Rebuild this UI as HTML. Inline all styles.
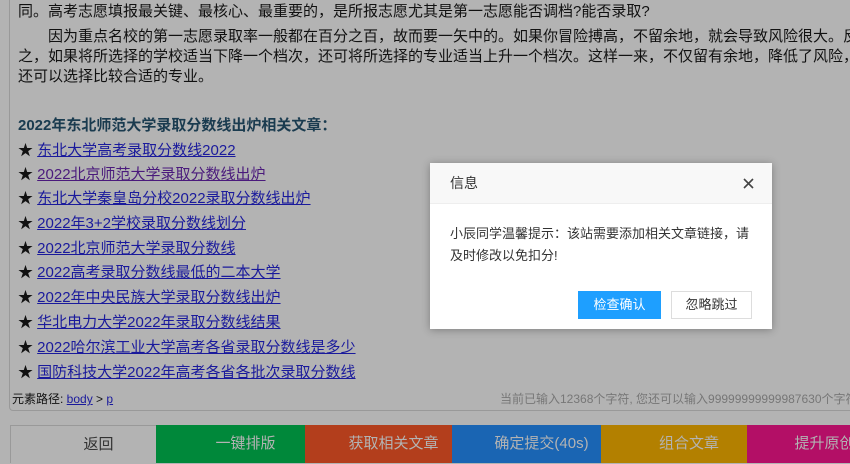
<!DOCTYPE html>
<html><head><meta charset="utf-8"><style>
body{margin:0;width:850px;height:463px;overflow:hidden;background:#b3b3b3;font-family:"Liberation Sans","Noto Sans CJK SC",sans-serif;position:relative}
.ed{position:absolute;left:9px;top:-2px;width:850px;height:412px;border-left:1px solid #999;border-bottom:1px solid #999;border-radius:0 0 0 4px}
.t{position:absolute;left:18px;font-size:15px;color:#111;white-space:nowrap;line-height:20px}
a{color:#1a1a9c;text-decoration:underline}
.h{font-weight:bold;color:#1a3b4f}
.st{position:absolute;top:390px;font-size:12px;color:#111;white-space:nowrap}
.bt{position:absolute;top:425px;height:38px;line-height:38px;color:#b3b3b3;font-size:15px;text-align:center;padding-left:30px;box-sizing:border-box}
.dlg{position:absolute;left:430px;top:163px;width:342px;height:166px;background:#fff;box-shadow:0 1px 8px rgba(0,0,0,.3)}
</style></head><body>
<div class="ed"></div>
<div class="t" style="top:2px">同。高考志愿填报最关键、最核心、最重要的，是所报志愿尤其是第一志愿能否调档?能否录取?</div>
<div class="t" style="top:27px">　　因为重点名校的第一志愿录取率一般都在百分之百，故而要一矢中的。如果你冒险搏高，不留余地，就会导致风险很大。反</div>
<div class="t" style="top:47px">之，如果将所选择的学校适当下降一个档次，还可将所选择的专业适当上升一个档次。这样一来，不仅留有余地，降低了风险，</div>
<div class="t" style="top:67px">还可以选择比较合适的专业。</div>
<div class="t h" style="top:116px">2022年东北师范大学录取分数线出炉相关文章：</div>
<div class="t" style="top:141px">★ <a>东北大学高考录取分数线2022</a></div>
<div class="t" style="top:165px">★ <a style="color:#4a1a7c">2022北京师范大学录取分数线出炉</a></div>
<div class="t" style="top:189px">★ <a>东北大学秦皇岛分校2022录取分数线出炉</a></div>
<div class="t" style="top:214px">★ <a>2022年3+2学校录取分数线划分</a></div>
<div class="t" style="top:239px">★ <a>2022北京师范大学录取分数线</a></div>
<div class="t" style="top:263px">★ <a>2022高考录取分数线最低的二本大学</a></div>
<div class="t" style="top:288px">★ <a>2022年中央民族大学录取分数线出炉</a></div>
<div class="t" style="top:313px">★ <a>华北电力大学2022年录取分数线结果</a></div>
<div class="t" style="top:338px">★ <a>2022哈尔滨工业大学高考各省录取分数线是多少</a></div>
<div class="t" style="top:363px">★ <a>国防科技大学2022年高考各省各批次录取分数线</a></div>
<div class="st" style="left:12px">元素路径: <a>body</a> &gt; <a>p</a></div>
<div class="st" style="left:500px;color:#777">当前已输入12368个字符, 您还可以输入99999999999987630个字符</div>
<div class="bt" style="left:10px;width:146px;background:#b3b3b3;color:#333;border-top:1px solid #999;border-left:1px solid #999">返回</div>
<div class="bt" style="left:156px;width:149px;background:#00883a">一键排版</div>
<div class="bt" style="left:305px;width:147px;background:#b33e1c">获取相关文章</div>
<div class="bt" style="left:452px;width:149px;background:#1a65b3">确定提交(40s)</div>
<div class="bt" style="left:601px;width:146px;background:#b38000">组合文章</div>
<div class="bt" style="left:747px;width:140px;background:#b30f66">提升原创度</div>
<div class="dlg">
<div style="height:40px;background:#f8f8f8;border-bottom:1px solid #eee;font-size:14px;color:#333;line-height:40px;padding-left:20px;position:relative">信息<svg style="position:absolute;right:18px;top:15px" width="11" height="11" viewBox="0 0 11 11"><path d="M1 1L10 10M10 1L1 10" stroke="#444" stroke-width="1.6"/></svg></div>
<div style="padding:19px 20px 0;font-size:13px;color:#333;line-height:22px">小辰同学温馨提示：该站需要添加相关文章链接，请及时修改以免扣分!</div>
<div style="position:absolute;left:148px;top:128px;width:83px;height:28px;background:#1e9fff;color:#fff;font-size:13px;line-height:28px;text-align:center">检查确认</div>
<div style="position:absolute;left:241px;top:128px;width:81px;height:28px;border:1px solid #ddd;box-sizing:border-box;color:#333;font-size:13px;line-height:26px;text-align:center">忽略跳过</div>
</div>
</body></html>
